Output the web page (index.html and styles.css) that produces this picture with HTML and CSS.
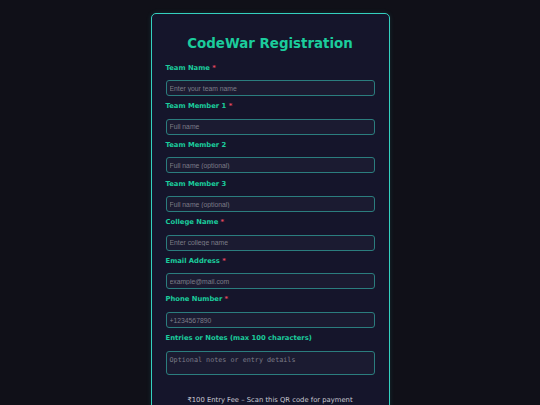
FILE: index.html
```html
<!DOCTYPE html>
<html>
<head>
<meta charset="utf-8">
<link rel="stylesheet" href="styles.css">
</head>
<body>
<div class="card">
  <h1 class="title">CodeWar Registration</h1>
  <form class="form">
    <div class="field">
      <label class="label">Team Name <span class="req">*</span></label>
      <input class="input" type="text" placeholder="Enter your team name">
    </div>
    <div class="field">
      <label class="label">Team Member 1 <span class="req">*</span></label>
      <input class="input" type="text" placeholder="Full name">
    </div>
    <div class="field">
      <label class="label">Team Member 2</label>
      <input class="input" type="text" placeholder="Full name (optional)">
    </div>
    <div class="field">
      <label class="label">Team Member 3</label>
      <input class="input" type="text" placeholder="Full name (optional)">
    </div>
    <div class="field">
      <label class="label">College Name <span class="req">*</span></label>
      <input class="input" type="text" placeholder="Enter college name">
    </div>
    <div class="field">
      <label class="label">Email Address <span class="req">*</span></label>
      <input class="input" type="email" placeholder="example@mail.com">
    </div>
    <div class="field">
      <label class="label">Phone Number <span class="req">*</span></label>
      <input class="input" type="tel" placeholder="+1234567890">
    </div>
    <div class="field">
      <label class="label">Entries or Notes (max 100 characters)</label>
      <textarea class="textarea" placeholder="Optional notes or entry details"></textarea>
    </div>
    <p class="fee">₹100 Entry Fee – Scan this QR code for payment</p>
  </form>
</div>
</body>
</html>
```

FILE: styles.css
```css
html, body {
  margin: 0;
  padding: 0;
  background: #101018;
}
body {
  padding-top: 13px;
  font-family: "DejaVu Sans", Verdana, sans-serif;
}
.card {
  width: 209px;
  margin: 0 auto;
  border: 1px solid #34d0bf;
  border-radius: 5px;
  background: #15152b;
  padding: 21px 14px 40px;
  box-shadow: 0 0 5px rgba(46, 196, 180, 0.15);
}
.title {
  margin: 0;
  font-size: 13.4px;
  line-height: 18px;
  font-weight: bold;
  color: #1bcc9c;
  text-align: center;
}
.form {
  display: flex;
  flex-direction: column;
  margin-top: 10.6px;
}
.field {
  display: flex;
  flex-direction: column;
  margin-bottom: 6.05px;
}
.label {
  font-size: 6.8px;
  line-height: 9px;
  font-weight: bold;
  color: #1bcc9c;
  margin-bottom: 7.6px;
}
.req {
  color: #e0475f;
}
.input, .textarea {
  box-sizing: border-box;
  width: 100%;
  margin: 0;
  border: 1px solid #2b7d7e;
  border-radius: 3px;
  background: #1b1b31;
  color: #ddd;
  padding: 0 3px;
  outline: none;
}
.input {
  height: 16px;
  font-family: "Liberation Sans", Arial, sans-serif;
  font-size: 6.8px;
}
.textarea {
  display: block;
  height: 24px;
  padding: 4px 3px;
  font-family: "DejaVu Sans Mono", monospace;
  font-size: 6.75px;
  line-height: 8px;
  resize: none;
}
.input::placeholder, .textarea::placeholder {
  color: #7c7c88;
}
.fee {
  margin: 15.4px 0 0;
  font-size: 6.8px;
  line-height: 9px;
  color: #c9c9d2;
  text-align: center;
}
```
